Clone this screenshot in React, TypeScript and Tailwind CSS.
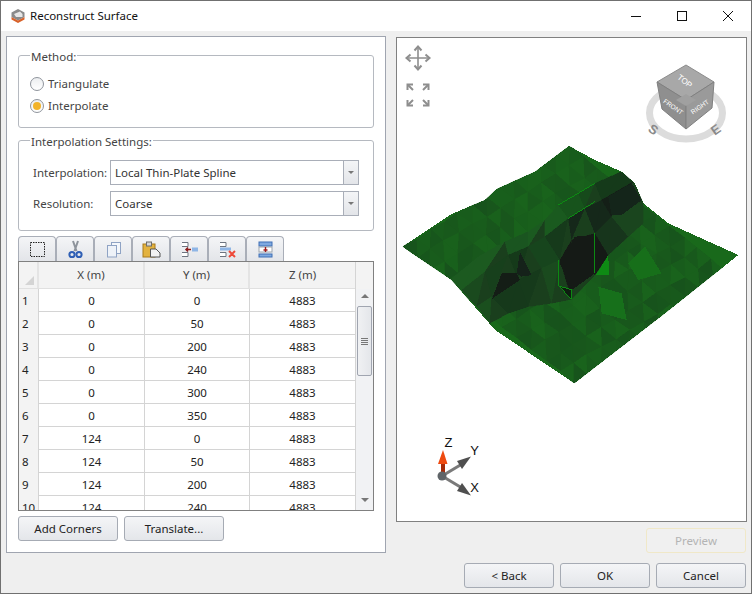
import React from 'react';

const FONT = "font-['Noto_Sans',sans-serif]";

const rows = [
  [1, 0, 0], [2, 0, 50], [3, 0, 200], [4, 0, 240], [5, 0, 300],
  [6, 0, 350], [7, 124, 0], [8, 124, 50], [9, 124, 200], [10, 124, 240],
];

// Terrain mesh, drawn in a space 3x the screen so the facets can be read off a zoomed crop
const outline = '22,320 170,222 270,180 305,147 420,95 522,18 600,60 680,95 720,130 745,190 820,250 1030,345 810,520 538,730 300,570 170,420';

const noise = (i: number) => {
  const s = Math.sin(i * 12.9898) * 43758.5453;
  return s - Math.floor(s);
};

const mix = (t: number) => {
  const a = [26, 112, 28];
  const b = [22, 70, 28];
  return `rgb(${a.map((c, i) => Math.round(c + (b[i] - c) * t)).join(',')})`;
};

const buildFacets = () => {
  const n = 12;
  const A = [22, 320], B = [522, 18], D = [538, 730];
  const point = (iu: number, iv: number) => {
    const u = iu / n, v = iv / n;
    const jx = (noise(iu * 31 + iv) - 0.5) * 8, jy = (noise(iu + iv * 47) - 0.5) * 8;
    return [A[0] + u * (B[0] - A[0]) + v * (D[0] - A[0]) + jx, A[1] + u * (B[1] - A[1]) + v * (D[1] - A[1]) + jy];
  };
  const facets: { pts: string; fill: string }[] = [];
  for (let iu = 0; iu < n; iu++) {
    for (let iv = 0; iv < n; iv++) {
      [0, 1].forEach((k) => {
        const r = noise(iu * 7 + iv * 13 + k * 3 + 1);
        const p = k === 0
          ? [point(iu, iv), point(iu + 1, iv), point(iu, iv + 1)]
          : [point(iu + 1, iv), point(iu + 1, iv + 1), point(iu, iv + 1)];
        facets.push({ pts: p.map((q) => q.join(',')).join(' '), fill: mix(0.3 + r * 0.4) });
      });
    }
  }
  return facets;
};

// The dark slope: four polylines running along the ridge, with one shade per cell between them
const slopeLines = [
  [[165, 420], [250, 350], [330, 305], [400, 275], [450, 240], [490, 195], [550, 160], [600, 130], [690, 90]],
  [[200, 450], [270, 395], [340, 345], [400, 320], [450, 290], [520, 235], [570, 205], [620, 180], [715, 125]],
  [[245, 500], [290, 470], [370, 420], [440, 385], [495, 360], [530, 300], [600, 280], [650, 230], [745, 185]],
  [[285, 550], [340, 520], [400, 500], [470, 490], [530, 478], [600, 405], [640, 345], [700, 290], [745, 250]],
];
const slopeShades = [
  ['#1c5a20', '#1c5a20', '#1a5520', '#1b5a20', '#1a5a1f', '#17531c', '#164a1b', '#153a1a'],
  ['#1a4a1e', '#17401c', '#153a1a', '#17451d', '#163a1b', '#15281a', '#15281a', '#141f17'],
  ['#1a4f1e', '#16391b', '#163a1b', '#1a4a1e', '#151a16', '#151a16', '#17351c', '#1a451e'],
];

const buildSlope = () => {
  const cells: { pts: string; fill: string }[] = [];
  slopeShades.forEach((line, r) => {
    line.forEach((fill, c) => {
      const [a, b, d, e] = [slopeLines[r][c], slopeLines[r][c + 1], slopeLines[r + 1][c + 1], slopeLines[r + 1][c]];
      cells.push({ pts: [a, b, e].join(' '), fill });
      cells.push({ pts: [b, d, e].join(' '), fill: noise(r * 9 + c) > 0.5 ? '#1a3f1d' : fill });
    });
  });
  return cells;
};

const overlays: [string, string][] = [
  ['495,370 540,290 600,285 600,400 530,450', '#151a16'],
  ['290,480 320,400 365,400 375,420 300,470', '#141d16'],
  ['365,400 375,335 410,405 380,410', '#15221a'],
  ['640,170 710,130 740,180 680,225 650,225', '#14251a'],
  ['603,405 640,345 642,405', '#0e8a14'],
  ['495,440 530,450 528,475', '#0e1c10'],
  ['700,370 750,320 800,400 730,420', '#176f1a'],
  ['610,440 680,460 695,540 620,520', '#17701b'],
];

const TerrainMesh = () => (
  <g transform="translate(395 140) scale(0.3333)" shapeRendering="crispEdges">
    <clipPath id="surface-clip"><polygon points={outline} /></clipPath>
    <polygon points={outline} fill="#19691b" />
    <g clipPath="url(#surface-clip)">
      {buildFacets().map((f, i) => <polygon key={i} points={f.pts} fill={f.fill} stroke={f.fill} />)}
      {buildSlope().map((f, i) => <polygon key={i} points={f.pts} fill={f.fill} stroke={f.fill} />)}
      {overlays.map(([pts, fill], i) => <polygon key={i} points={pts} fill={fill} />)}
      <path d="M490 195 L600 130M520 235 L600 185M600 280 V400M490 360 V437 L530 478 V450 L490 437" fill="none" stroke="#0c8a12" strokeWidth="3" />
    </g>
  </g>
);

const NavCube = () => (
  <g>
    <ellipse cx="686" cy="113" rx="36.5" ry="26" fill="none" stroke="#dcdcdc" strokeWidth="7" />
    <polygon points="686,65 714,82 686,100 657,82" fill="#a8a8a8" stroke="#8c8c8c" />
    <polygon points="657,82 686,100 686,129 662,109" fill="#8f8f8f" stroke="#808080" />
    <polygon points="714,82 686,100 686,129 712,108" fill="#9a9a9a" stroke="#808080" />
    <polygon points="686,94 696,100 686,106 676,100" fill="#a0a0a0" />
    <text x="685" y="84" fontSize="8" fill="#fff" textAnchor="middle" transform="rotate(38 685 81)" fontFamily="Liberation Sans">TOP</text>
    <text x="673" y="109" fontSize="6.5" fill="#fff" textAnchor="middle" transform="rotate(35 673 107)" fontFamily="Liberation Sans">FRONT</text>
    <text x="700" y="109" fontSize="6.5" fill="#fff" textAnchor="middle" transform="rotate(-35 700 107)" fontFamily="Liberation Sans">RIGHT</text>
    <text x="653" y="134" fontSize="13" fontWeight="700" fill="#8a8a8a" textAnchor="middle" transform="rotate(35 653 130)" fontFamily="Liberation Sans">S</text>
    <text x="716" y="134" fontSize="13" fontWeight="700" fill="#8a8a8a" textAnchor="middle" transform="rotate(-35 716 130)" fontFamily="Liberation Sans">E</text>
  </g>
);

const ViewIcons = () => (
  <g fill="none" stroke="#8e8e8e" strokeWidth="1.6">
    <path d="M418 47 V69 M407 58 H429" />
    <path d="M414.5 50.5 L418 46.5 L421.5 50.5 M414.5 65.5 L418 69.5 L421.5 65.5 M410.5 54.5 L406.5 58 L410.5 61.5 M425.5 54.5 L429.5 58 L425.5 61.5" strokeWidth="2" />
    <path d="M408 85 L413 90 M428 85 L423 90 M408 105 L413 100 M428 105 L423 100" strokeWidth="2" />
    <path d="M407.5 90 V84.5 H413 M428.5 90 V84.5 H423 M407.5 100 V105.5 H413 M428.5 100 V105.5 H423" strokeWidth="2" />
  </g>
);

const Axes = () => (
  <g>
    <line x1="442" y1="476" x2="462" y2="464" stroke="#7a7a7a" strokeWidth="3" />
    <polygon points="457,461 471,456.5 462,469" fill="#4f4f4f" />
    <line x1="442" y1="476" x2="462" y2="488" stroke="#7a7a7a" strokeWidth="3" />
    <polygon points="457,491 471,495.5 462,483" fill="#4f4f4f" />
    <rect x="441" y="462" width="4" height="14" fill="#a52a08" />
    <polygon points="438,464 443,450 447.5,464" fill="#ee4a10" />
    <circle cx="442" cy="476" r="4.5" fill="#5f6468" />
    <g fontSize="13" fill="#111" fontFamily="Liberation Sans" textAnchor="middle">
      <text x="448.5" y="447">Z</text>
      <text x="474.5" y="455">Y</text>
      <text x="474.5" y="492">X</text>
    </g>
  </g>
);

const ToolButton = ({ children }: { children: React.ReactNode }) => (
  <button className="w-[38px] h-[25px] flex items-center justify-center rounded-t-[4px] border border-b-0 border-[#a9aeb8] bg-gradient-to-b from-[#f4f5f7] to-[#e3e5e9]">
    {children}
  </button>
);

const toolIcons = [
  <svg key="select" width="17" height="17" viewBox="0 0 17 17"><rect x="1.5" y="1.5" width="14" height="14" fill="none" stroke="#222" strokeDasharray="1.5 1" /></svg>,
  <svg key="cut" width="15" height="19" viewBox="0 0 15 19">
    <path d="M5 1 L8.5 11 M10 1 L6.5 11" stroke="#8d939b" strokeWidth="2" fill="none" />
    <circle cx="4" cy="14.5" r="2.6" fill="none" stroke="#2f5fb5" strokeWidth="2" />
    <circle cx="11" cy="14.5" r="2.6" fill="none" stroke="#2f5fb5" strokeWidth="2" />
  </svg>,
  <svg key="copy" width="17" height="17" viewBox="0 0 17 17">
    <rect x="6.5" y="1.5" width="9" height="11" fill="#f4f7fb" stroke="#8fa3c4" />
    <rect x="2.5" y="4.5" width="9" height="11.5" fill="#eef2f8" stroke="#8fa3c4" />
  </svg>,
  <svg key="paste" width="19" height="17" viewBox="0 0 19 17">
    <rect x="1" y="3" width="12" height="13" fill="#e3b23f" stroke="#a87a1c" />
    <rect x="4.5" y="1" width="5" height="4" fill="#d8d8d8" stroke="#6d6d6d" />
    <polygon points="8.5,8 14,8 18,12 18,16 8.5,16" fill="#f2f2f2" stroke="#555" />
  </svg>,
  <svg key="insert" width="17" height="17" viewBox="0 0 17 17">
    <path d="M1 1.5 H7 V5.5 H1 M1 11.5 H7 V15.5 H1" fill="#fff" stroke="#6d7480" />
    <rect x="11" y="6.5" width="6" height="4" fill="#8fb6e6" />
    <path d="M5 8.5 H10 M7 6.5 L5 8.5 L7 10.5" stroke="#8c1c1c" strokeWidth="1.5" fill="none" />
  </svg>,
  <svg key="delete" width="17" height="17" viewBox="0 0 17 17">
    <path d="M1 1.5 H7 V5.5 H1 M1 11.5 H7 V15.5 H1" fill="#fff" stroke="#6d7480" />
    <rect x="1" y="6.5" width="11" height="3" fill="#8fb6e6" />
    <path d="M10 10 L16 16 M16 10 L10 16" stroke="#ee4a3a" strokeWidth="2" />
  </svg>,
  <svg key="row" width="15" height="17" viewBox="0 0 15 17">
    <rect x="1" y="1" width="13" height="4" fill="#7fa9e0" stroke="#3f6fb5" />
    <rect x="1" y="6" width="13" height="5" fill="#fff" stroke="#9aa3ae" />
    <rect x="1" y="13" width="13" height="3" fill="#7fa9e0" stroke="#3f6fb5" />
    <path d="M7.5 6 V11 M5.5 9 H9.5" stroke="#a01c1c" strokeWidth="1.4" />
  </svg>,
];

const DropField = ({ value }: { value: string }) => (
  <div className="flex-1 h-[25px] flex border border-[#a9aeb8] bg-white">
    <div className="flex-1 pl-[4px] leading-[24px] text-[#333]">{value}</div>
    <div className="w-[15px] flex items-center justify-center border-l border-[#a9aeb8] bg-gradient-to-b from-[#f4f5f7] to-[#e3e5e9]">
      <div className="w-0 h-0 border-x-[3px] border-x-transparent border-t-[3px] border-t-[#777]" />
    </div>
  </div>
);

const Radio = ({ label, checked }: { label: string; checked?: boolean }) => (
  <div className="flex items-center gap-[4px] h-[22px]">
    <div className="w-[14px] h-[14px] rounded-full border border-[#8f949c] bg-gradient-to-b from-[#eceef0] to-white flex items-center justify-center">
      {checked && <div className="w-[8px] h-[8px] rounded-full bg-[#f2b32a]" />}
    </div>
    <span className="text-[#444]">{label}</span>
  </div>
);

const PushButton = ({ label, width }: { label: string; width: string }) => (
  <button className={`${width} h-[25px] pt-px rounded-[3px] border border-[#a6abb4] bg-gradient-to-b from-[#f4f5f7] to-[#e4e6ea] text-[#222]`}>
    {label}
  </button>
);

export default function App() {
  return (
    <div className={`w-[752px] h-[594px] border border-[#707070] bg-[#efefef] flex flex-col text-[11.5px] ${FONT}`}>
      {/* Title bar */}
      <div className="h-[30px] shrink-0 bg-white flex items-center">
        <svg className="ml-[9px]" width="16" height="16" viewBox="0 0 16 16">
          <polygon points="8,1 14.5,4.5 14.5,9 8,12.5 1.5,9 1.5,4.5" fill="#8a8a8a" />
          <polygon points="4,6 10,3.5 12.5,6 12.5,9 6,9" fill="#e6e6e6" />
          <polygon points="1.5,9 8,12.5 14.5,9 14.5,11.5 8,15 1.5,11.5" fill="#d8622a" />
        </svg>
        <span className="ml-[4px] text-[#111]">Reconstruct Surface</span>
        <div className="ml-auto flex">
          <div className="w-[46px] h-[30px] flex items-center justify-center">
            <svg width="10" height="10" viewBox="0 0 10 10"><path d="M0 5.5 H10" stroke="#111" /></svg>
          </div>
          <div className="w-[46px] h-[30px] flex items-center justify-center">
            <svg width="10" height="10" viewBox="0 0 10 10"><rect x="0.5" y="0.5" width="9" height="9" fill="none" stroke="#111" /></svg>
          </div>
          <div className="w-[46px] h-[30px] flex items-center justify-center">
            <svg width="10" height="10" viewBox="0 0 10 10"><path d="M0 0 L10 10 M10 0 L0 10" stroke="#111" /></svg>
          </div>
        </div>
      </div>

      <div className="flex gap-[10px] pl-[5px] pt-[5px] h-[522px]">
        {/* Left panel */}
        <div className="w-[380px] h-[517px] border border-[#a0a5b0] bg-white px-[11px] pt-[9px]">
          <fieldset className="h-[82px] border border-[#b5b9c0] rounded-[3px] pl-[11px]">
            <legend className="px-[1px] pt-[4px] leading-[14px] text-[#444]">Method:</legend>
            <div className="pt-[9px]">
              <Radio label="Triangulate" />
              <Radio label="Interpolate" checked />
            </div>
          </fieldset>
          <fieldset className="mt-[3px] h-[100px] border border-[#b5b9c0] rounded-[3px] pl-[14px] pr-[14px]">
            <legend className="px-[1px] pt-[4px] -ml-[3px] leading-[14px] text-[#444]">Interpolation Settings:</legend>
            <div className="pt-[11px] flex flex-col gap-[6px]">
              <div className="flex items-center">
                <span className="w-[77px] text-[#444]">Interpolation:</span>
                <DropField value="Local Thin-Plate Spline" />
              </div>
              <div className="flex items-center">
                <span className="w-[77px] text-[#444]">Resolution:</span>
                <DropField value="Coarse" />
              </div>
            </div>
          </fieldset>

          {/* Toolbar */}
          <div className="mt-[5px] flex">{toolIcons.map((icon, i) => <ToolButton key={i}>{icon}</ToolButton>)}</div>

          {/* Point table */}
          <div className="h-[250px] border border-[#808080] flex overflow-hidden">
            <div className="w-[336px] shrink-0">
              <div className="h-[27px] grid grid-cols-[20px_106px_105px_105px] bg-[#f3f3f3] border-b border-[#e0e0e0] text-[#444] text-center leading-[26px]">
                <div className="relative border-r-2 border-[#e4e4e4]">
                  <div className="absolute right-[3px] bottom-[3px] w-0 h-0 border-l-[9px] border-l-transparent border-b-[9px] border-b-[#d4d4d4]" />
                </div>
                <div className="border-r-2 border-[#e4e4e4]">X (m)</div>
                <div className="border-r-2 border-[#e4e4e4]">Y (m)</div>
                <div>Z (m)</div>
              </div>
              {rows.map(([n, x, y]) => (
                <div key={n} className="h-[23px] grid grid-cols-[20px_106px_105px_105px] border-b border-[#d4d4d4] text-center leading-[24px] text-[#222]">
                  <div className="bg-[#f3f3f3] border-r border-[#d4d4d4] text-left pl-[3px]">{n}</div>
                  <div className="border-r border-[#d4d4d4]">{x}</div>
                  <div className="border-r border-[#d4d4d4]">{y}</div>
                  <div>4883</div>
                </div>
              ))}
            </div>
            {/* Scrollbar */}
            <div className="flex-1 border-l border-[#d4d4d4] bg-[#f1f2f4] flex flex-col items-center">
              <div className="h-[27px] w-full bg-[#f3f3f3] shrink-0" />
              <div className="mt-[5px] w-0 h-0 border-x-[4px] border-x-transparent border-b-[4px] border-b-[#777]" />
              <div className="mt-[8px] w-[15px] h-[70px] rounded-[2px] border border-[#a0a5b0] bg-gradient-to-r from-[#f0f1f3] to-[#e4e6ea] flex flex-col items-center justify-center gap-[1px]">
                <div className="w-[7px] h-px bg-[#777]" />
                <div className="w-[7px] h-px bg-[#777]" />
                <div className="w-[7px] h-px bg-[#777]" />
                <div className="w-[7px] h-px bg-[#777]" />
              </div>
              <div className="mt-auto mb-[8px] w-0 h-0 border-x-[4px] border-x-transparent border-t-[4px] border-t-[#777]" />
            </div>
          </div>

          <div className="mt-[5px] flex gap-[6px]">
            <PushButton label="Add Corners" width="w-[100px]" />
            <PushButton label="Translate..." width="w-[100px]" />
          </div>
        </div>

        {/* Viewport */}
        <div className="w-[351px] pt-px flex flex-col">
          <div className="h-[485px] border border-[#808080] bg-white overflow-hidden">
            <svg width="349" height="483" viewBox="397 38 349 483" className="block">
              <ViewIcons />
              <NavCube />
              <TerrainMesh />
              <Axes />
            </svg>
          </div>
          <button className="mt-[6px] mr-px pt-px self-end w-[100px] h-[25px] rounded-[3px] border border-[#f0e8c8] bg-[#f0f0f0] text-[#b4b4b4]">Preview</button>
        </div>
      </div>

      <div className="mt-[10px] pr-[5px] flex justify-end gap-[6px]">
        <PushButton label="< Back" width="w-[90px]" />
        <PushButton label="OK" width="w-[90px]" />
        <PushButton label="Cancel" width="w-[90px]" />
      </div>
    </div>
  );
}
